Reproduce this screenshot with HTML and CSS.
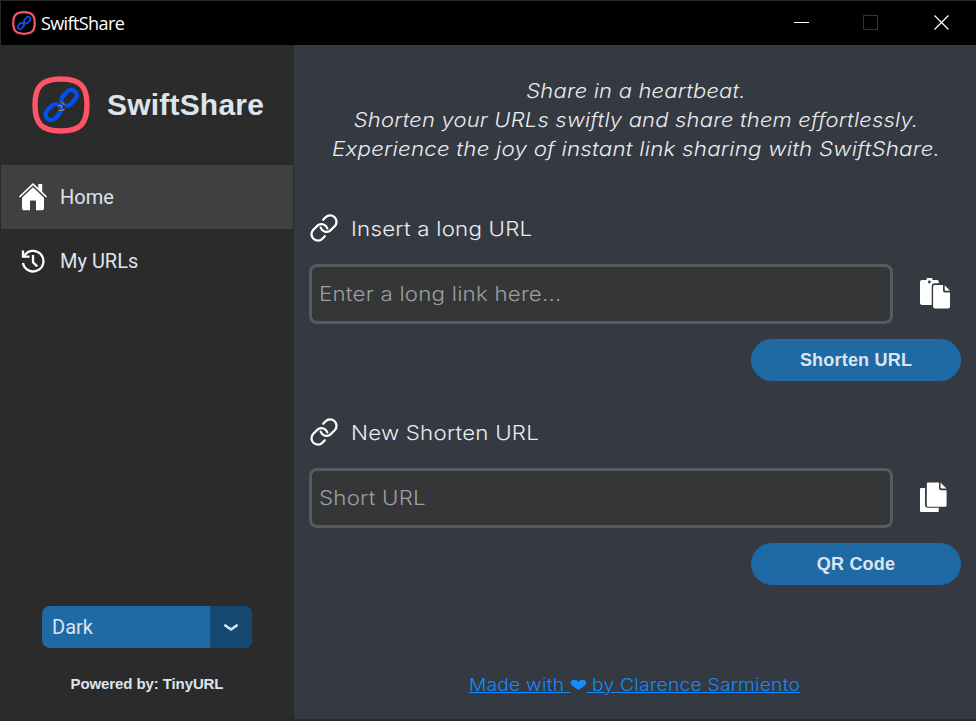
FILE: index.html
```html
<!DOCTYPE html>
<html lang="en">
<head>
<meta charset="utf-8">
<title>SwiftShare</title>
<link rel="stylesheet" href="styles.css">
</head>
<body>
<svg class="defs" width="0" height="0">
  <symbol id="logo" viewBox="0 0 58 58">
    <path d="M29 3C48 3 55 10 55 29S48 55 29 55 3 48 3 29 10 3 29 3Z" fill="none" stroke="#ff5468" stroke-width="5.4"/>
    <g fill="none" stroke="#0050f0" stroke-width="4.400">
      <rect x="-5.500" y="-8.700" width="11" height="17.400" rx="5.500" transform="translate(37 21.800) rotate(43)"/>
      <rect x="-5.500" y="-8.700" width="11" height="17.400" rx="5.500" transform="translate(21.300 36.200) rotate(43)"/>
    </g>
    <path d="M28 26.500q4-.5 4.500 4M26 30q-1.500 4 2.500 4.500" fill="none" stroke="#282828" stroke-width="2"/>
    <path d="M28.500 26.300q3 .2 4 3M26 31q.5-2.500 2.800-1.500t.2 2.500M26.500 34q3 1.500 6-1" fill="none" stroke="#b58a55" stroke-width="1.100"/>
  </symbol>
  <symbol id="link" viewBox="0 0 28 28">
    <g fill="none" stroke="#fff" stroke-width="2.300" stroke-linecap="round">
      <path d="M13.200 5.700 15.600 3.300A6.300 6.300 0 0 1 24.700 12.200L19.700 17.100A6.300 6.300 0 0 1 10.700 13.700"/>
      <path d="M14.800 22.300 12.400 24.700A6.300 6.300 0 0 1 3.300 15.800L8.300 10.900A6.300 6.300 0 0 1 17.300 14.300"/>
    </g>
  </symbol>
</svg>
<div class="window">
  <header class="titlebar">
    <svg class="app-icon"><use href="#logo"/></svg>
    <span class="title">SwiftShare</span>
    <svg class="controls" width="156" height="16" viewBox="0 0 156 16" fill="none">
      <path d="M0 7.500h15" stroke="#fff"/>
      <rect x="69.500" y=".5" width="14" height="14" stroke="#333"/>
      <path d="m140.500.5 14 14m0-14-14 14" stroke="#fff" stroke-width="1.200"/>
    </svg>
  </header>
  <div class="body">
    <aside class="sidebar">
      <div class="brand">
        <svg class="brand-icon"><use href="#logo"/></svg>
        <span>SwiftShare</span>
      </div>
      <nav>
        <a class="nav-item active">
          <svg width="28" height="28" viewBox="0 0 28 28">
            <path d="M1 13.500 14 1.200l13 12.300" fill="none" stroke="#fff" stroke-width="1.700" stroke-linecap="round" stroke-linejoin="round"/>
            <path d="M19.300 1h3.900v8l-3.900-3.600ZM14 4.300l11 10.400V25.500a1.700 1.700 0 0 1-1.700 1.700H17V18.500q0-1-1-1H12q-1 0-1 1v8.700H4.700A1.700 1.700 0 0 1 3 25.500V14.700Z" fill="#fff"/>
          </svg>
          <span>Home</span>
        </a>
        <a class="nav-item">
          <svg width="28" height="28" viewBox="0 0 28 28" fill="none" stroke="#fff" stroke-width="2.300">
            <path d="M4 16a10.300 10.300 0 1 0 1.200-7L4.500 10"/>
            <path d="M4 3.500V9.700H10.500" stroke-width="2.300"/>
            <path d="M14 8v7.200l4.300 4.300"/>
          </svg>
          <span>My URLs</span>
        </a>
      </nav>
      <div class="side-foot">
        <div class="select">
          <span class="select-value">Dark</span>
          <span class="select-arrow"><svg width="16" height="10" viewBox="0 0 16 10"><path d="m2.300 3.500 5.700 4 5.700-4" fill="none" stroke="#dce4ee" stroke-width="2.700" stroke-linecap="round" stroke-linejoin="round"/></svg></span>
        </div>
        <div class="powered">Powered by: TinyURL</div>
      </div>
    </aside>
    <main>
      <div class="tagline">
        <div class="t1">Share in a heartbeat.</div>
        <div class="t2">Shorten your URLs swiftly and share them effortlessly.</div>
        <div class="t3">Experience the joy of instant link sharing with SwiftShare.</div>
      </div>
      <section>
        <div class="label"><svg class="link-icon"><use href="#link"/></svg><span>Insert a long URL</span></div>
        <div class="row">
          <div class="field"><span>Enter a long link here...</span></div>
          <svg class="action" width="30" height="31" viewBox="0 0 30 31">
            <path d="M2 2h4.500a3 3 0 0 1 6 0H17q1.800 0 1.800 2v1.200H15q-3.300 0-3.300 3.300V27H2q-2 0-2-2V4q0-2 2-2Z" fill="#fff"/>
            <circle cx="9.400" cy="4" r="1.400" fill="#353941"/>
            <path d="M15 7h8v5.500q0 2 2 2h5V28.500q0 1.900-1.900 1.900H15q-1.900 0-1.900-1.900V9q0-2 1.900-2Zm9.700.3L30 12.800h-4.300q-1 0-1-1Z" fill="#fff"/>
          </svg>
        </div>
        <div class="btn">Shorten URL</div>
      </section>
      <section class="second">
        <div class="label"><svg class="link-icon"><use href="#link"/></svg><span>New Shorten URL</span></div>
        <div class="row">
          <div class="field"><span>Short URL</span></div>
          <svg class="action" width="30" height="31" viewBox="0 0 30 31">
            <path d="M1 6h4v17.300q0 2.400 2.400 2.400H18.800V29q0 1-1 1H1q-1 0-1-1V7q0-1 1-1ZM8 .5H19v5.700q0 2 2 2h5.600V23.500q0 1.200-1.200 1.200H8q-1.200 0-1.200-1.200V1.700Q6.800.5 8 .5ZM20.500.5l6 6h-5q-1 0-1-1Z" fill="#fff"/>
          </svg>
        </div>
        <div class="btn">QR Code</div>
      </section>
      <a class="credit">Made with <svg width="15" height="12" viewBox="0 0 17 13" preserveAspectRatio="none"><path d="M8.500 12C6 9.500.5 7.500.5 4 .5.500 6-.6 8.500 3 11-.6 16.500.5 16.500 4c0 3.500-5.500 5.500-8 8Z" fill="#108cff"/></svg> by Clarence Sarmiento</a>
    </main>
  </div>
</div>
</body>
</html>
```

FILE: styles.css
```css
* { box-sizing: border-box; }
body { margin: 0; width: 976px; height: 721px; overflow: hidden; }
.defs { display: block; }
.window { height: 721px; display: flex; flex-direction: column; border: solid #292929; border-width: 1px 0 2px 1px; }
.titlebar { height: 44px; flex: none; background: #000; display: flex; align-items: center; padding: 0 26px 0 11px; }
.app-icon { width: 24px; height: 24px; margin-top: -1px; }
.title { margin: 0 auto 0 5px; font: 18px "Open Sans", sans-serif; color: #fff; letter-spacing: -.6px; }
.controls { margin-top: -1px; }
.body { flex: 1; display: flex; min-height: 0; }
.sidebar { width: 293px; background: #2b2b2b; display: flex; flex-direction: column; border-right: 1px solid #292b2e; }
.brand { height: 120px; flex: none; display: flex; align-items: center; padding-left: 31px; gap: 17px; font: bold 30px "Liberation Sans", Arial, sans-serif; letter-spacing: .2px; color: #dce4ee; }
.brand-icon { width: 58px; height: 58px; }
.nav-item { height: 64px; display: flex; align-items: center; gap: 13px; padding-left: 18px; font: 20px Roboto, sans-serif; color: #dce4ee; }
.active { background: #404040; }
.side-foot { margin-top: auto; padding: 0 41px 26px; }
.select { width: 210px; height: 42px; display: flex; border-radius: 8px; overflow: hidden; background: #1f6aa5; color: #dce4ee; font: 20px/42px Roboto, sans-serif; }
.select-value { flex: 1; padding-left: 10px; }
.select-arrow { width: 42px; background: #144870; display: grid; place-items: center; }
.powered { margin-top: 27px; text-align: center; font: bold 15px/18px "Liberation Sans", Arial, sans-serif; letter-spacing: -.1px; color: #dce4ee; }
main { flex: 1; background: #353941; padding: 32px 15px 0; font-family: Inter, sans-serif; font-weight: 300; letter-spacing: .2px; display: flex; flex-direction: column; }
.tagline { font-style: italic; font-size: 20px; line-height: 29px; color: #eaecef; text-align: center; height: 117px; padding-left: 2px; white-space: nowrap; }
.t1, .t2 { transform: scaleX(1.097); }
.t3 { transform: scaleX(1.116); }
.label { height: 70px; display: flex; align-items: center; gap: 13px; padding: 0 0 2px 1px; font-size: 20px; color: #eaecef; }
.label span, .field span { display: inline-block; transform: scaleX(1.115); transform-origin: left; }
.label span { padding-top: 2px; }
.link-icon { width: 28px; height: 28px; }
.row { display: flex; align-items: center; gap: 27px; height: 60px; }
.field { width: 584px; height: 60px; border: 3px solid #565b5e; border-radius: 8px; background: #343638; padding-left: 7px; font-size: 20px; line-height: 55px; color: #9e9e9e; }
.action { margin-bottom: 2px; }
.btn { width: 210px; height: 42px; margin: 15px 0 0 auto; border-radius: 21px; background: #1f6aa5; color: #dce4ee; text-align: center; font: bold 18px/42px "Liberation Sans", Arial, sans-serif; }
.second { margin-top: 17px; }
.credit { align-self: center; margin-top: 87px; font-size: 17.5px; line-height: 26px; color: #108cff; text-decoration: underline; white-space: nowrap; transform: scaleX(1.1); }
```
